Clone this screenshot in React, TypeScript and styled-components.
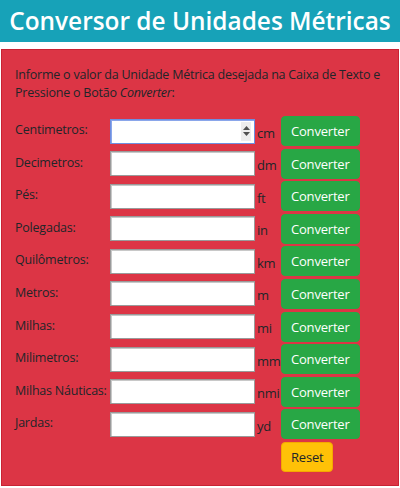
import React from "react";
import styled, { createGlobalStyle } from "styled-components";

const GlobalStyle = createGlobalStyle`
  html, body {
    margin: 0;
    padding: 0;
    background: #fff;
  }
  body {
    font-family: "Open Sans", "Noto Sans", sans-serif;
    color: #212529;
  }
`;

const StyledPage = styled.div`
  width: 400px;
`;

const StyledTitle = styled.h1`
  margin: 0;
  height: 42px;
  line-height: 42px;
  background-color: #17a2b8;
  color: #fff;
  font-size: 24.4px;
  font-weight: 600;
  text-align: center;
  white-space: nowrap;
`;

const StyledPanel = styled.section`
  margin: 7px 1px 3px;
  padding: 16px 13px 13px;
  background-color: #dc3545;
  border: 1px solid #c82333;
  font-size: 12.5px;
  letter-spacing: -0.22px;
`;

const StyledIntro = styled.p`
  margin: 0 0 14px;
  line-height: 18px;
`;

const StyledForm = styled.form`
  display: flex;
  flex-direction: column;
  gap: 2.6px;
`;

const StyledRow = styled.div`
  display: grid;
  grid-template-columns: 95px 145px 26px auto;
  align-items: center;
  height: 30px;
`;

const StyledLabel = styled.label`
  align-self: start;
  padding-top: 5px;
  white-space: nowrap;
`;

const StyledInputWrap = styled.div`
  position: relative;
  height: 25px;
`;

const StyledInput = styled.input<{ $focused?: boolean }>`
  box-sizing: border-box;
  width: 145px;
  height: 25px;
  margin: 0;
  padding: 0 4px;
  background: #fff;
  border: 1px solid ${(p) => (p.$focused ? "#6e8fe0" : "#9a9a9a")};
  box-shadow: inset 1px 1px 0 ${(p) => (p.$focused ? "#8aa6ea" : "#c8c8c8")};
  outline: none;
  font: inherit;
`;

const StyledSpinner = styled.span`
  position: absolute;
  right: 4px;
  top: 3px;
  width: 10px;
  height: 19px;
  background: #ededed;
  display: flex;
  flex-direction: column;
  align-items: center;
  justify-content: center;
  gap: 2px;
  svg {
    display: block;
  }
`;

const StyledUnit = styled.span`
  padding-left: 2px;
  padding-top: 3px;
  font-size: 13px;
  letter-spacing: -0.3px;
  white-space: nowrap;
`;

const StyledButton = styled.button<{ $variant?: "success" | "warning" }>`
  height: 30px;
  margin: 0;
  padding: 0 9px;
  border-radius: 4px;
  font: inherit;
  font-size: 13px;
  letter-spacing: -0.2px;
  cursor: pointer;
  justify-self: start;
  background-color: ${(p) => (p.$variant === "warning" ? "#ffc107" : "#28a745")};
  border: 1px solid ${(p) => (p.$variant === "warning" ? "#f5a800" : "#28a745")};
  color: ${(p) => (p.$variant === "warning" ? "#212529" : "#fff")};
`;

const units = [
  { label: "Centimetros:", unit: "cm" },
  { label: "Decimetros:", unit: "dm" },
  { label: "Pés:", unit: "ft" },
  { label: "Polegadas:", unit: "in" },
  { label: "Quilômetros:", unit: "km" },
  { label: "Metros:", unit: "m" },
  { label: "Milhas:", unit: "mi" },
  { label: "Milimetros:", unit: "mm" },
  { label: "Milhas Náuticas:", unit: "nmi" },
  { label: "Jardas:", unit: "yd" },
];

export default function App() {
  return (
    <StyledPage>
      <GlobalStyle />
      <StyledTitle>Conversor de Unidades Métricas</StyledTitle>
      <StyledPanel>
        <StyledIntro>
          Informe o valor da Unidade Métrica desejada na Caixa de Texto e
          Pressione o Botão <em>Converter</em>:
        </StyledIntro>
        <StyledForm onSubmit={(e) => e.preventDefault()}>
          {units.map((u, idx) => (
            <StyledRow key={u.unit}>
              <StyledLabel>{u.label}</StyledLabel>
              <StyledInputWrap>
                <StyledInput type="text" $focused={idx === 0} />
                {idx === 0 && (
                  <StyledSpinner>
                    <svg width="7" height="4" viewBox="0 0 7 4">
                      <path d="M3.5 0 L7 4 L0 4 Z" fill="#505050" />
                    </svg>
                    <svg width="7" height="4" viewBox="0 0 7 4">
                      <path d="M0 0 L7 0 L3.5 4 Z" fill="#505050" />
                    </svg>
                  </StyledSpinner>
                )}
              </StyledInputWrap>
              <StyledUnit>{u.unit}</StyledUnit>
              <StyledButton type="button">Converter</StyledButton>
            </StyledRow>
          ))}
          <StyledRow>
            <span />
            <span />
            <span />
            <StyledButton type="reset" $variant="warning">
              Reset
            </StyledButton>
          </StyledRow>
        </StyledForm>
      </StyledPanel>
    </StyledPage>
  );
}
